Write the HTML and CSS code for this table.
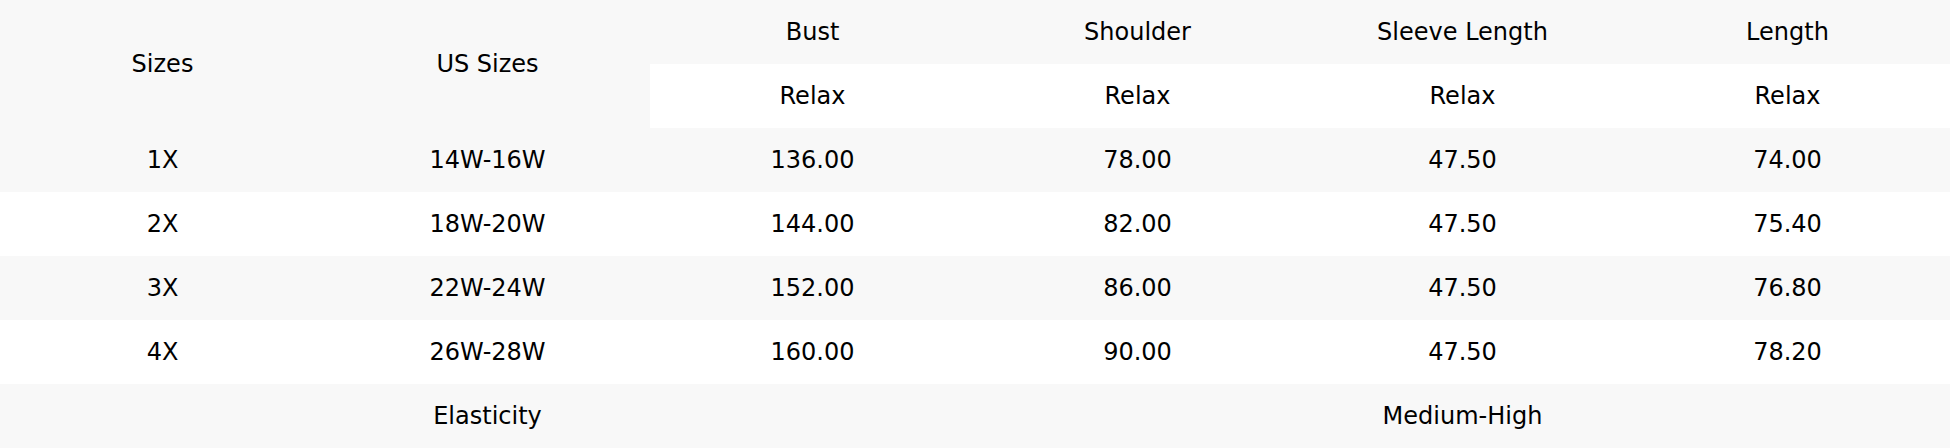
FILE: index.html
```html
<!DOCTYPE html>
<html>
<head>
<meta charset="utf-8">
<link rel="stylesheet" href="styles.css">
</head>
<body>
<table class="size-table">
  <colgroup>
    <col><col><col><col><col><col>
  </colgroup>
  <tr class="row-grey">
    <td rowspan="2">Sizes</td>
    <td rowspan="2">US Sizes</td>
    <td>Bust</td>
    <td>Shoulder</td>
    <td>Sleeve Length</td>
    <td>Length</td>
  </tr>
  <tr class="row-white">
    <td>Relax</td>
    <td>Relax</td>
    <td>Relax</td>
    <td>Relax</td>
  </tr>
  <tr class="row-grey">
    <td>1X</td><td>14W-16W</td><td>136.00</td><td>78.00</td><td>47.50</td><td>74.00</td>
  </tr>
  <tr class="row-white">
    <td>2X</td><td>18W-20W</td><td>144.00</td><td>82.00</td><td>47.50</td><td>75.40</td>
  </tr>
  <tr class="row-grey">
    <td>3X</td><td>22W-24W</td><td>152.00</td><td>86.00</td><td>47.50</td><td>76.80</td>
  </tr>
  <tr class="row-white">
    <td>4X</td><td>26W-28W</td><td>160.00</td><td>90.00</td><td>47.50</td><td>78.20</td>
  </tr>
  <tr class="row-grey">
    <td colspan="3">Elasticity</td>
    <td colspan="3">Medium-High</td>
  </tr>
</table>
</body>
</html>
```
FILE: styles.css
```css
html, body {
  margin: 0;
  padding: 0;
  background: #ffffff;
}
.size-table {
  width: 1950px;
  table-layout: fixed;
  border-collapse: collapse;
  border-spacing: 0;
  font-family: "DejaVu Sans", sans-serif;
  font-size: 24px;
  line-height: 28px;
  color: #000000;
}
.size-table col {
  width: 325px;
}
.size-table tr {
  height: 64px;
}
.size-table td {
  box-sizing: border-box;
  height: 64px;
  padding: 0;
  border: 0;
  text-align: center;
  vertical-align: middle;
  white-space: nowrap;
}
.row-grey td {
  background: #f8f8f8;
}
.row-white td {
  background: #ffffff;
}
```
